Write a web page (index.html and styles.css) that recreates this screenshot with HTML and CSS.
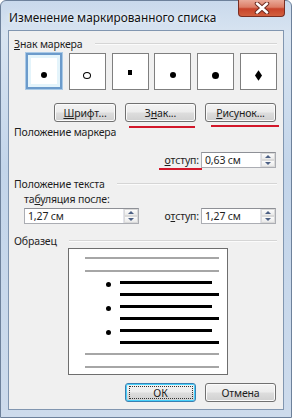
FILE: index.html
```html
<!DOCTYPE html>
<html lang="ru">
<head>
  <meta charset="UTF-8">
  <title>Изменение маркированного списка</title>
  <link rel="stylesheet" href="styles.css">
</head>
<body>
  <div class="window">
    <div class="titlebar">
      <span class="title">Изменение маркированного списка</span>
      <div class="close-btn">
        <svg width="20" height="12" viewBox="0 0 20 12">
          <path d="M5 1.5 L15 10.5 M15 1.5 L5 10.5" stroke="#6b2a20" stroke-width="4.5" stroke-linecap="round"/>
          <path d="M5 1.5 L15 10.5 M15 1.5 L5 10.5" stroke="#ffffff" stroke-width="2.5" stroke-linecap="round"/>
        </svg>
      </div>
    </div>

    <div class="client">
      <div class="group-head group-first">
        <span><u>З</u>нак маркера</span>
        <span class="rule"></span>
      </div>

      <div class="markers">
        <div class="marker selected"><span class="dot"></span></div>
        <div class="marker"><span class="ring"></span></div>
        <div class="marker"><span class="square"></span></div>
        <div class="marker"><span class="dot"></span></div>
        <div class="marker"><span class="dot big"></span></div>
        <div class="marker"><span class="diamond"></span></div>
      </div>

      <div class="btn-row">
        <div class="btn btn-font"><u>Ш</u>рифт...</div>
        <div class="btn marked">З<u>н</u>ак...</div>
        <div class="btn marked marked-wide"><u>Р</u>исунок...</div>
      </div>

      <div class="group-head group-plain">
        <span>Положение маркера</span>
      </div>

      <div class="field-row row-marker">
        <span class="label marked-label"><u>о</u>тступ:</span>
        <div class="spin-input short">
          <span class="value">0,63 см</span>
          <div class="spinner"><span class="up"></span><span class="down"></span></div>
        </div>
      </div>

      <div class="group-head group-text">
        <span>Положение текста</span>
        <span class="rule"></span>
      </div>

      <div class="label tab-label">та<u>б</u>уляция после:</div>

      <div class="field-row row-text">
        <div class="spin-input long">
          <span class="value">1,27 см</span>
          <div class="spinner"><span class="up"></span><span class="down"></span></div>
        </div>
        <div class="right-field">
          <span class="label">о<u>т</u>ступ:</span>
          <div class="spin-input short">
            <span class="value">1,27 см</span>
            <div class="spinner"><span class="up"></span><span class="down"></span></div>
          </div>
        </div>
      </div>

      <div class="group-head group-sample">
        <span>Образец</span>
        <span class="rule"></span>
      </div>

      <div class="preview">
        <div class="grey-line"></div>
        <div class="grey-line second"></div>
        <div class="item">
          <span class="bullet"></span>
          <div class="lines"><div class="bar short-bar"></div><div class="bar"></div></div>
        </div>
        <div class="item">
          <span class="bullet"></span>
          <div class="lines"><div class="bar short-bar"></div><div class="bar"></div></div>
        </div>
        <div class="item">
          <span class="bullet"></span>
          <div class="lines"><div class="bar short-bar"></div><div class="bar"></div></div>
        </div>
        <div class="grey-line after"></div>
        <div class="grey-line second"></div>
      </div>

      <div class="dialog-buttons">
        <div class="btn btn-ok"><span class="focus">ОК</span></div>
        <div class="btn">Отмена</div>
      </div>
    </div>
  </div>
</body>
</html>
```

FILE: styles.css
```css
body {
  margin: 0;
  font-family: "Noto Sans", "DejaVu Sans", sans-serif;
  font-size: 10.5px;
  letter-spacing: -0.15px;
  color: #1e1e1e;
}

u {
  text-decoration: underline;
  text-underline-offset: 1px;
}

.window {
  width: 292px;
  height: 418px;
  box-sizing: border-box;
  padding: 0 7px 7px 7px;
  display: flex;
  flex-direction: column;
  background: linear-gradient(180deg, #c9d9ec 0%, #d8e4f1 8%, #c3d5ea 40%, #cddbec 100%);
  border: 1px solid #6d819b;
  border-radius: 6px 6px 0 0;
}

.titlebar {
  height: 29px;
  display: flex;
  align-items: flex-start;
  justify-content: space-between;
  flex-shrink: 0;
}

.title {
  font-size: 11.8px;
  letter-spacing: 0;
  color: #111;
  margin-top: 8px;
  margin-left: 1px;
  text-shadow: 0 0 6px #eef4fb, 0 0 3px #eef4fb;
}

.close-btn {
  width: 45px;
  height: 16px;
  margin-top: -1px;
  margin-right: -1px;
  border: 1px solid #7a2e22;
  border-top: none;
  border-radius: 0 0 4px 4px;
  background: linear-gradient(180deg, #e9a998 0%, #dc7d66 45%, #c8432a 55%, #d2603f 100%);
  display: flex;
  align-items: center;
  justify-content: center;
}

.client {
  flex: 1;
  background: #f0f0f0;
  border: 1px solid #8196b0;
  padding: 0 6px 0 5px;
  display: flex;
  flex-direction: column;
}

.group-head {
  display: flex;
  align-items: center;
  height: 14px;
  line-height: 14px;
  gap: 12px;
}

.group-head .rule {
  flex: 1;
  height: 0;
  border-top: 1px solid #d5d5d5;
  border-bottom: 1px solid #fbfbfb;
}

.group-first {
  margin-top: 6px;
}

.markers {
  display: flex;
  justify-content: space-between;
  margin: 2px 0 0 11px;
}

.marker {
  width: 37px;
  height: 37px;
  box-sizing: border-box;
  background: #fff;
  border: 1px solid #7f7f7f;
  display: flex;
  align-items: center;
  justify-content: center;
  padding-top: 7px;
}

.marker.selected {
  width: 38px;
  height: 38px;
  margin-top: -1px;
  border: 1px solid #a9c9e6;
  box-shadow: inset 0 0 0 2px #6c9bcb, inset 0 0 0 5px #e4f4fb;
}

.dot {
  width: 6px;
  height: 6px;
  border-radius: 50%;
  background: #000;
}

.dot.big {
  width: 7px;
  height: 7px;
}

.ring {
  width: 6px;
  height: 5px;
  border-radius: 50%;
  border: 1px solid #000;
}

.square {
  width: 4px;
  height: 5px;
  background: #000;
  margin-bottom: 6px;
}

.diamond {
  width: 5px;
  height: 5px;
  background: #000;
  transform: scaleY(1.5) rotate(45deg);
}

.btn-row {
  display: flex;
  gap: 9px;
  margin: 13px 0 0 40px;
}

.btn {
  position: relative;
  height: 19px;
  box-sizing: border-box;
  border: 1px solid #707070;
  border-radius: 3px;
  background: linear-gradient(180deg, #f3f3f3 0%, #ececec 48%, #dddddd 52%, #d0d0d0 100%);
  box-shadow: inset 0 0 0 1px #fbfbfb;
  display: flex;
  align-items: center;
  justify-content: center;
  width: 71px;
  color: #1e1e1e;
}

.btn-font {
  width: 62px;
}

.marked::after {
  content: "";
  position: absolute;
  left: 3px;
  right: 0;
  top: 22px;
  height: 2px;
  background: #d3172a;
}

.marked-wide::after {
  left: 5px;
  right: -4px;
  top: 21px;
}

.group-plain {
  margin-top: 3px;
}

.field-row {
  display: flex;
  align-items: center;
}

.row-marker {
  justify-content: flex-end;
  margin-top: 13px;
  margin-right: 1px;
  gap: 2px;
}

.label {
  line-height: 14px;
}

.marked-label {
  position: relative;
}

.marked-label::after {
  content: "";
  position: absolute;
  left: -6px;
  right: -3px;
  top: 15px;
  height: 2px;
  background: #d3172a;
}

.spin-input {
  height: 16px;
  box-sizing: border-box;
  background: #fff;
  border: 1px solid #abadb3;
  border-top-color: #8e9096;
  display: flex;
  align-items: center;
  justify-content: space-between;
}

.spin-input.short {
  width: 75px;
}

.spin-input.long {
  width: 115px;
}

.value {
  padding-left: 3px;
}

.spinner {
  width: 14px;
  height: 100%;
  display: flex;
  flex-direction: column;
  border-left: 1px solid #e2e3ea;
}

.spinner span {
  flex: 1;
  display: flex;
  align-items: center;
  justify-content: center;
  background: linear-gradient(180deg, #fbfbfb, #eaeaea);
  border: 1px solid #dadada;
}

.spinner .up::before,
.spinner .down::before {
  content: "";
  border-left: 3px solid transparent;
  border-right: 3px solid transparent;
}

.spinner .up::before {
  border-bottom: 3px solid #4d6185;
}

.spinner .down::before {
  border-top: 3px solid #4d6185;
}

.group-text {
  margin-top: 9px;
}

.tab-label {
  margin: 1px 0 0 10px;
}

.row-text {
  justify-content: space-between;
  margin: 2px 1px 0 10px;
}

.right-field {
  display: flex;
  align-items: center;
  gap: 2px;
}

.group-sample {
  margin-top: 10px;
}

.preview {
  width: 160px;
  height: 127px;
  box-sizing: border-box;
  margin: 0 0 0 54px;
  background: #fff;
  border: 1px solid #6e6e6e;
  padding: 8px 8px 0 16px;
  display: flex;
  flex-direction: column;
}

.grey-line {
  height: 2px;
  background: #a6a6a6;
}

.grey-line.second {
  margin-top: 11px;
}

.grey-line.after {
  margin-top: 9px;
}

.item {
  display: flex;
  align-items: flex-start;
  margin-top: 9px;
  padding-left: 21px;
  gap: 9px;
}

.bullet {
  width: 5px;
  height: 5px;
  border-radius: 50%;
  background: #000;
  margin-top: 1px;
}

.lines {
  flex: 1;
  display: flex;
  flex-direction: column;
  gap: 9px;
}

.bar {
  height: 3px;
  background: #000;
}

.bar.short-bar {
  width: 92px;
}

.dialog-buttons {
  display: flex;
  justify-content: flex-end;
  gap: 9px;
  margin: 8px 1px 0 0;
}

.btn-ok {
  border-color: #3c7fb1;
  box-shadow: inset 0 0 0 1px #48d1fb;
}

.focus {
  width: 62px;
  height: 11px;
  display: flex;
  align-items: center;
  justify-content: center;
  outline: 1px dotted #333;
}
```
